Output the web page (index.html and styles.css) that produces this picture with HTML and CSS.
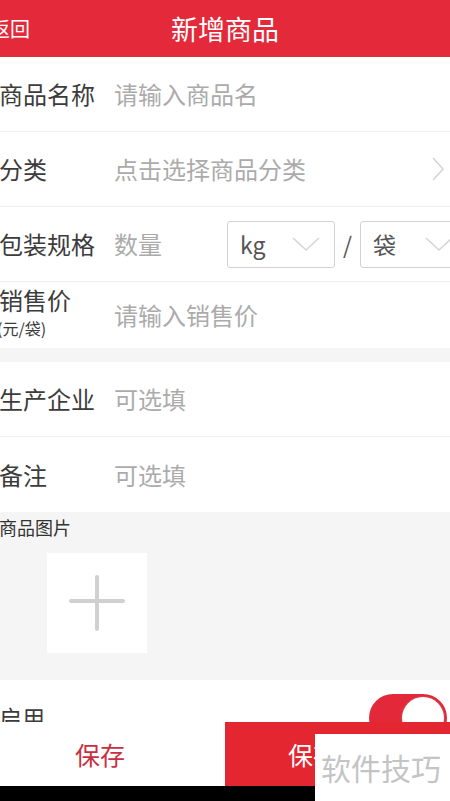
FILE: index.html
```html
<!DOCTYPE html>
<html lang="zh">
<head>
<meta charset="utf-8">
<title>新增商品</title>
<link rel="stylesheet" href="styles.css">
</head>
<body>
<div class="page">
  <header class="header">
    <span class="back">返回</span>
    <span class="title">新增商品</span>
    <span></span>
  </header>

  <div class="row line">
    <span class="label">商品名称</span>
    <span class="ph">请输入商品名</span>
  </div>
  <div class="row line">
    <span class="label">分类</span>
    <span class="ph grow">点击选择商品分类</span>
    <svg class="chev-right" width="14" height="26" viewBox="0 0 14 26"><path d="M2 2 L12 13 L2 24" fill="none" stroke="#d4d4d4" stroke-width="1.6"/></svg>
  </div>
  <div class="row line">
    <span class="label">包装规格</span>
    <span class="ph qty">数量</span>
    <div class="select">
      <span class="sel-text">kg</span>
      <svg class="chev-down" width="28" height="16" viewBox="0 0 28 16"><path d="M1 2 L14 14 L27 2" fill="none" stroke="#d6d6d6" stroke-width="1.6"/></svg>
    </div>
    <span class="slash">/</span>
    <div class="select">
      <span class="sel-text">袋</span>
      <svg class="chev-down" width="28" height="16" viewBox="0 0 28 16"><path d="M1 2 L14 14 L27 2" fill="none" stroke="#d6d6d6" stroke-width="1.6"/></svg>
    </div>
  </div>
  <div class="row price">
    <span class="label label-2">
      <span class="main">销售价</span>
      <span class="sub">(元/袋)</span>
    </span>
    <span class="ph">请输入销售价</span>
  </div>

  <div class="gap"></div>

  <div class="row line">
    <span class="label">生产企业</span>
    <span class="ph">可选填</span>
  </div>
  <div class="row">
    <span class="label">备注</span>
    <span class="ph">可选填</span>
  </div>

  <section class="images">
    <div class="images-title">商品图片</div>
    <div class="add-box">
      <svg width="56" height="58" viewBox="0 0 56 58"><path d="M28 3 V55 M2 27 H54" stroke="#d0d0d0" stroke-width="4" stroke-linecap="round" fill="none"/></svg>
    </div>
  </section>

  <div class="row-toggle">
    <span class="label toggle-label">启用</span>
    <span class="toggle"><span class="knob"></span></span>
  </div>
</div>

<footer class="footer">
  <div class="bar">
    <div class="btn btn-light">保存</div>
    <div class="btn btn-red">保存并继续</div>
  </div>
  <div class="navbar"></div>
</footer>

<div class="watermark">软件技巧</div>
</body>
</html>
```

FILE: styles.css
```css
* { box-sizing: border-box; }

html, body {
  margin: 0;
  padding: 0;
}

body {
  width: 450px;
  height: 801px;
  overflow: hidden;
  background: #ffffff;
  font-family: "Noto Sans CJK SC", "Noto Sans", "Liberation Sans", sans-serif;
  color: #333333;
  position: relative;
}

.page {
  width: 450px;
  overflow: hidden;
}

.header {
  height: 57px;
  background: #e3293a;
  display: grid;
  grid-template-columns: 1fr auto 1fr;
  align-items: center;
  color: #ffffff;
}

.back {
  font-size: 20px;
  margin-left: -10px;
  line-height: 1;
}

.title {
  font-size: 27px;
  line-height: 1;
}

.row {
  height: 75px;
  display: flex;
  align-items: center;
  background: #ffffff;
  white-space: nowrap;
}

.row.line {
  border-bottom: 1px solid #eeeeee;
}

.label {
  flex: 0 0 115px;
  font-size: 24px;
  color: #3c3c3c;
  line-height: 1;
  margin-left: -1px;
}

.ph {
  font-size: 24px;
  color: #ababab;
  line-height: 1;
}

.grow { flex: 1; }

.chev-right {
  margin-right: 5px;
  flex: 0 0 auto;
}

.qty {
  flex: 0 0 113px;
}

.select {
  flex: 0 0 108px;
  height: 47px;
  border: 1px solid #d2d2d2;
  border-radius: 3px;
  display: flex;
  align-items: center;
  justify-content: space-between;
  padding: 0 14px 0 12px;
}

.sel-text {
  font-size: 23px;
  color: #555555;
  line-height: 1;
}

.slash {
  flex: 0 0 25px;
  text-align: center;
  font-size: 23px;
  color: #555555;
  line-height: 1;
}

.row.price {
  height: 66px;
}

.label-2 {
  display: flex;
  flex-direction: column;
  margin-top: -6px;
}

.label-2 .main {
  font-size: 24px;
  line-height: 28px;
}

.label-2 .sub {
  font-size: 16px;
  line-height: 20px;
  margin-top: 4px;
  margin-left: -2px;
  color: #3c3c3c;
}

.gap {
  height: 14px;
  background: #f5f5f5;
}

.images {
  height: 168px;
  background: #f5f5f5;
  padding-top: 3px;
}

.images-title {
  font-size: 18px;
  line-height: 25px;
  color: #333333;
  margin-left: -1px;
}

.add-box {
  width: 100px;
  height: 100px;
  margin: 13px 0 0 47px;
  background: #ffffff;
  display: flex;
  align-items: center;
  justify-content: center;
}

.row-toggle {
  height: 90px;
  display: flex;
  justify-content: space-between;
  align-items: flex-start;
  padding-top: 14px;
}

.toggle-label {
  margin-top: 12px;
  font-size: 23px;
}

.toggle {
  width: 78px;
  height: 48px;
  border-radius: 24px;
  background: #e3283a;
  margin-right: 3px;
  display: flex;
  align-items: center;
  justify-content: flex-end;
  padding-right: 3px;
}

.knob {
  width: 42px;
  height: 42px;
  border-radius: 50%;
  background: #ffffff;
  box-shadow: 0 0 0 1px #d84050;
}

.footer {
  position: fixed;
  left: 0;
  bottom: 0;
  width: 450px;
}

.bar {
  height: 64px;
  display: flex;
}

.btn {
  flex: 0 0 225px;
  min-width: 0;
  display: flex;
  align-items: center;
  font-size: 25px;
  white-space: nowrap;
  overflow: hidden;
}

.btn-light {
  background: #ffffff;
  color: #c8303f;
  padding-left: 75px;
}

.btn-red {
  background: #e3262f;
  color: #ffffff;
  padding-left: 63px;
}

.navbar {
  height: 15px;
  background: #000000;
}

.watermark {
  position: absolute;
  left: 315px;
  top: 734px;
  width: 135px;
  height: 67px;
  background: #ffffff;
  color: #c4c4c4;
  font-size: 30px;
  line-height: 1;
  padding: 18px 0 0 6px;
  white-space: nowrap;
}
```
